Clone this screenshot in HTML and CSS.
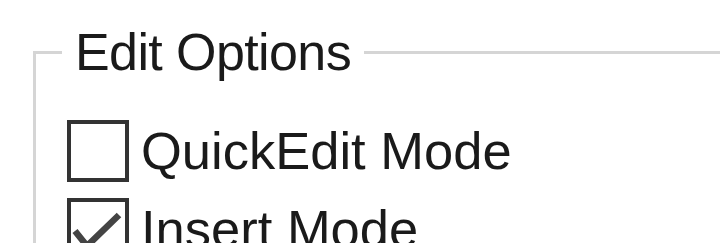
FILE: index.html
```html
<!DOCTYPE html>
<html>
<head>
  <title>Edit Options</title>
  <link rel="stylesheet" href="styles.css">
</head>
<body>
  <fieldset class="options">
    <legend>Edit Options</legend>

    <label class="check-row">
      <span class="check-box"></span>
      <span class="check-text">QuickEdit Mode</span>
    </label>

    <label class="check-row">
      <span class="check-box">
        <svg class="check-mark" viewBox="0 0 54 54">
          <polyline points="4,29 16,44 48,13"></polyline>
        </svg>
      </span>
      <span class="check-text">Insert Mode</span>
    </label>
  </fieldset>
</body>
</html>
```

FILE: styles.css
```css
/* Console properties - edit options */

html, body {
  margin: 0;
  padding: 0;
  background-color: #fff;
  overflow: hidden;
}

body {
  font-family: "Liberation Sans", Arial, sans-serif;
  color: #1a1a1a;
  height: 243px;
}

.options {
  margin: 22px 0 0 33px;
  padding: 0 0 0 26px;
  border: 3px solid #d5d5d5;
  border-right: none;
  border-radius: 0;
  min-width: 0;
}

.options legend {
  font-size: 52px;
  line-height: 60px;
  padding: 0 13px;
  letter-spacing: -0.6px;
}

.check-row {
  display: flex;
  align-items: center;
  gap: 12px;
  margin-left: 5px;
  margin-bottom: 16px;
}

.check-row:first-of-type {
  margin-top: 38px;
}

.check-box {
  width: 54px;
  height: 54px;
  border: 4px solid #333;
  background-color: #fff;
  flex-shrink: 0;
}

.check-mark {
  display: block;
  width: 54px;
  height: 54px;
}

.check-mark polyline {
  fill: none;
  stroke: #444;
  stroke-width: 6.5;
}

.check-text {
  font-size: 52.5px;
  line-height: 62px;
}
```
